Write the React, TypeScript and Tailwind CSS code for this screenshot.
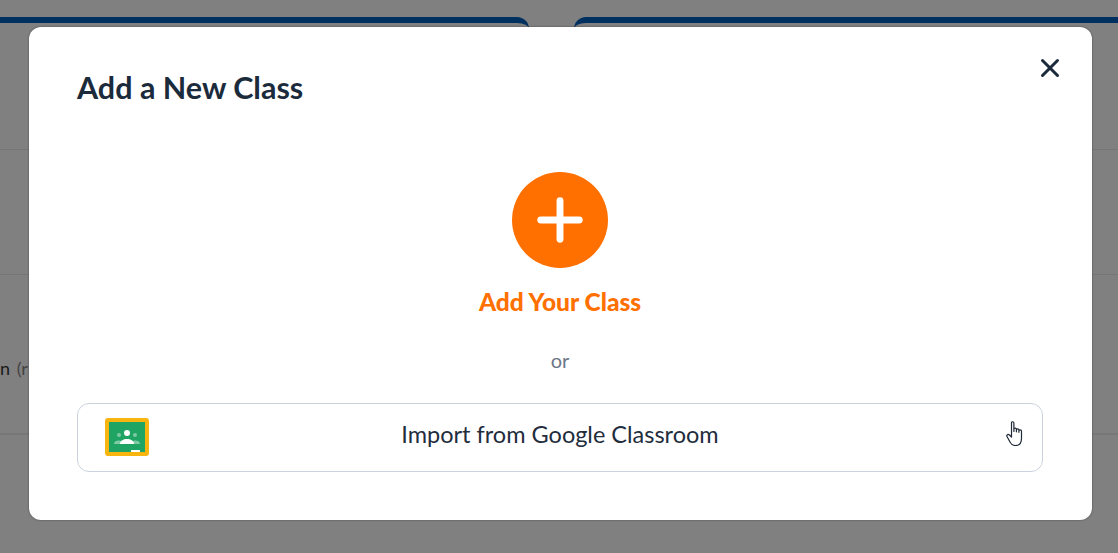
import React from 'react';
import { X, Plus } from 'lucide-react';

const ClassroomIcon = () => (
  <svg width="44" height="38" viewBox="0 0 44 38" className="absolute left-[27px] top-[14px]">
    <rect x="0" y="0" width="44" height="38" rx="3" fill="#f8b50f" />
    <rect x="4" y="4" width="36" height="30" fill="#1fa463" />
    <g fill="#7fc9a5">
      <circle cx="14" cy="17" r="2" />
      <circle cx="30" cy="17" r="2" />
      <path d="M9 26c0-2.500 2.500-3.500 5-3.500s4 .8 4 3.500z" />
      <path d="M26 26c0-2.700 1.500-3.500 4-3.500s5 1 5 3.500z" />
    </g>
    <circle cx="22" cy="15" r="3" fill="#fff" />
    <path d="M15 26c0-3.500 3.500-5 7-5s7 1.500 7 5z" fill="#fff" />
    <rect x="26" y="32" width="9" height="2" fill="#fff" />
  </svg>
);

const HandCursor = () => (
  <svg width="19" height="25" viewBox="0 0 19 25" fill="#fff" stroke="#1f2937" strokeWidth="1.200" strokeLinejoin="round" className="absolute left-[928px] top-[17px]">
    <path d="M5.500 2c0-1.700 2.400-1.700 2.400 0v8.500-2.200c0-1.500 2.500-1.500 2.500 0v2.500-1.800c0-1.500 2.500-1.500 2.500 0v2.300-1.300c0-1.500 2.600-1.500 2.600 0v7.500c0 4-2 7-6 7-3 0-4.500-1.600-5.500-3.500L1 15.500c-.8-1.500 1-2.800 2.400-1.500l2.100 2z" />
  </svg>
);

const BackgroundCard = ({ className }: { className: string }) => (
  <div className={className}>
    <div className="h-[127px] border-b border-[#747678]" />
    <div className="h-[125px] border-b border-[#747678]" />
    <div className="h-[160px] border-b-2 border-[#777777]" />
  </div>
);

export default function App() {
  return (
    <div className="relative h-[553px] w-[1118px] overflow-hidden bg-[#808080] font-['Lato',sans-serif]">
      {/* page behind the overlay */}
      <div className="flex gap-[45px] pt-[17px]">
        <BackgroundCard className="ml-[-20px] w-[549px] shrink-0 rounded-t-[12px] border-t-[6px] border-[#00305f]" />
        <BackgroundCard className="w-[600px] shrink-0 rounded-t-[12px] border-t-[6px] border-[#00305f]" />
      </div>
      <span className="absolute left-0 top-[357px] text-[18px] leading-[22px] text-[#1a1a1a]">
        n <span className="ml-[2px] text-[#444444]">(r</span>
      </span>

      {/* modal */}
      <div className="absolute left-[29px] top-[27px] flex h-[493px] w-[1063px] flex-col rounded-[12px] bg-white pl-[48px] pr-[49px] shadow-[0_0_2px_rgba(0,0,0,0.5)]">
        <h2 className="mt-[42px] text-[30.500px] font-bold leading-[36px] text-[#1b2b3b]">Add a New Class</h2>
        <button className="absolute right-[27px] top-[26px] text-[#1b2b3b]">
          <X size={30} strokeWidth={2.400} />
        </button>
        <div className="mt-[67px] flex flex-col items-center">
          <div className="flex h-[96px] w-[96px] items-center justify-center rounded-full bg-[#ff7000] text-white">
            <Plus size={66} strokeWidth={2.500} />
          </div>
          <div className="mt-[19px] text-[24.500px] font-black leading-[30px] text-[#ff7000]">Add Your Class</div>
          <div className="mt-[30px] text-[20px] leading-[26px] text-[#6b7785]">or</div>
        </div>
        <div className="relative mt-[30px] flex h-[69px] items-center justify-center rounded-[12px] border border-[#cdd3de] pb-[7px]">
          <ClassroomIcon />
          <div className="text-[23.500px] leading-[30px] text-[#1f2d3d]">Import from Google Classroom</div>
          <HandCursor />
        </div>
      </div>
    </div>
  );
}
